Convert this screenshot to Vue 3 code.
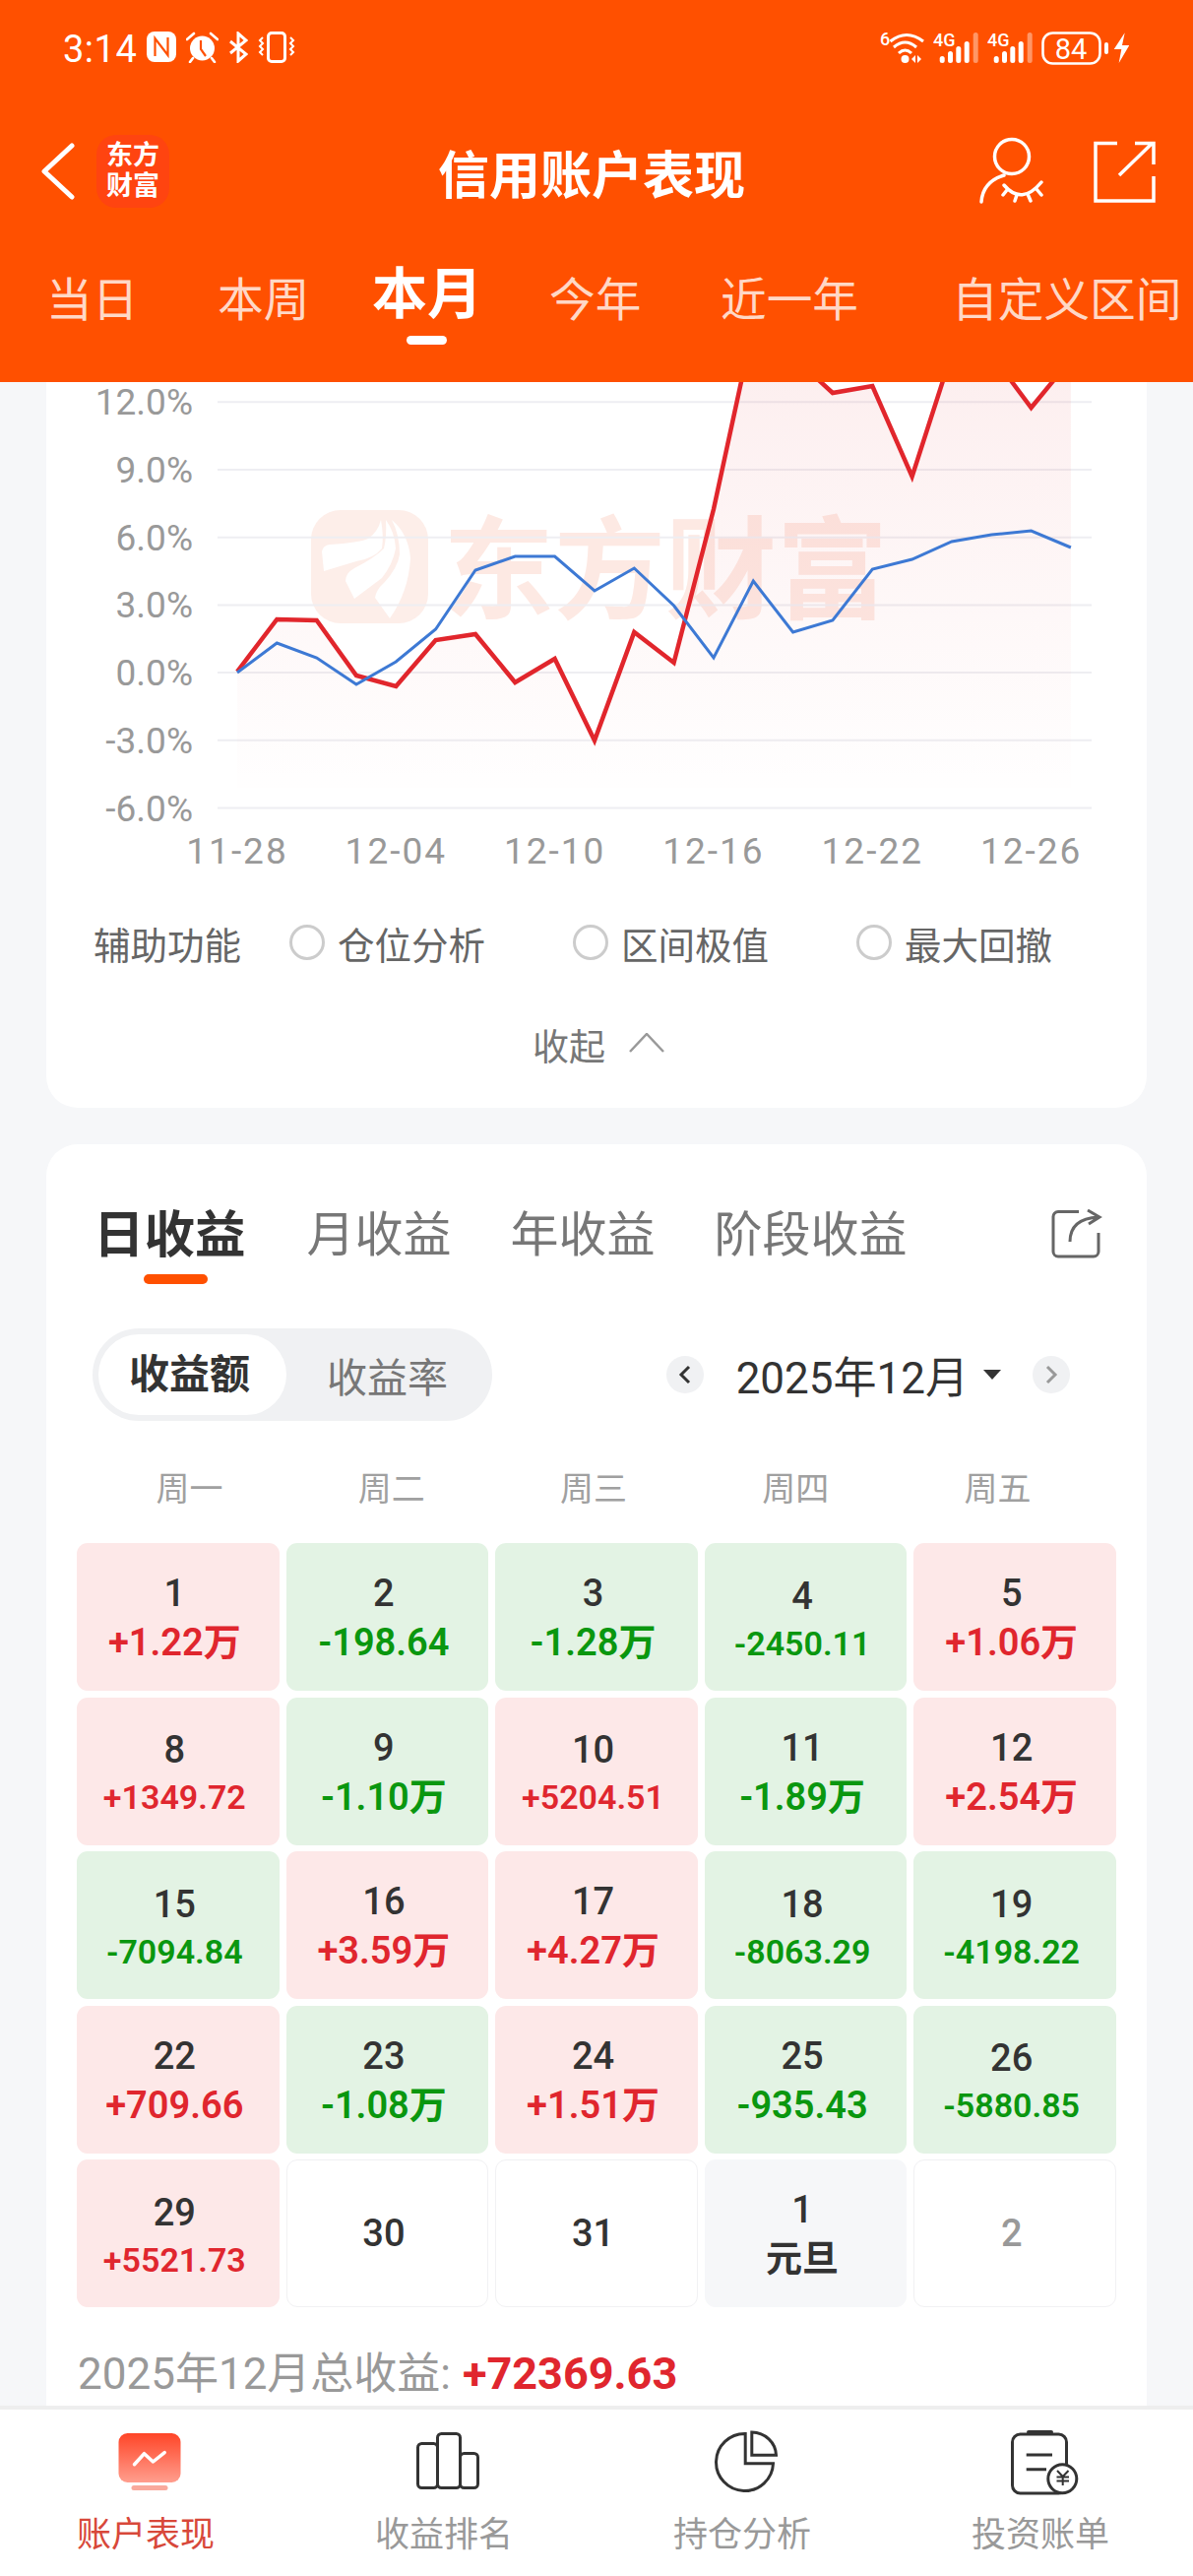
<template>
  <div class="page">
    <header class="top">
      <div class="status">
        <span class="time">3:14</span>
        <svg width="30" height="31" viewBox="0 0 30 31"><rect x="0" y="0" width="30" height="31" rx="8" fill="#fff" /><path d="M8.5 25V7l13 17V6" fill="none" stroke="#ff5000" stroke-width="2.2" /></svg>
        <svg width="33" height="32" viewBox="0 0 33 32"><circle cx="16.5" cy="17" r="12.5" fill="#fff" /><path d="M15 9v9l5 7" fill="none" stroke="#ff5000" stroke-width="2.2" /><path d="M1 8l7-6M32 8l-7-6M7 27l-3 4M26 27l3 4" stroke="#fff" stroke-width="2.6" stroke-linecap="round" /></svg>
        <svg width="20" height="32" viewBox="0 0 20 32"><path d="M2 10l16 13-8 7V2l8 7L2 22" fill="none" stroke="#fff" stroke-width="3" /></svg>
        <svg width="38" height="32" viewBox="0 0 38 32"><rect x="10.5" y="1.5" width="17" height="29" rx="3.5" fill="none" stroke="#fff" stroke-width="3" /><path d="M5 6l-3 3 3 3-3 3 3 3-3 3 3 3M33 6l3 3-3 3 3 3-3 3 3 3-3 3" fill="none" stroke="#fff" stroke-width="2" /></svg>
        <div class="status-right">
          <svg class="tall" width="45" height="42" viewBox="0 -8 45 42">
            <text x="0" y="14" class="st-small">6</text>
            <path d="M10.5 10Q27-3 44 10M14 16Q25.5 6 37 16M19 22q6.500-6 13 0" fill="none" stroke="#fff" stroke-width="3" />
            <circle cx="25.500" cy="28" r="4" fill="#fff" />
            <path d="M36 24l-4 4 4 4zM38 24l4 4-4 4z" fill="#fff" />
          </svg>
          <svg v-for="n in 2" :key="n" class="tall" width="46" height="42" viewBox="0 -8 46 42">
            <text x="0" y="15" class="st-small">4G</text>
            <rect v-for="b in signalBars" :key="b.x" :x="b.x" :y="b.y" width="5" :height="32 - b.y" rx="2.500" fill="#fff" :opacity="b.o" />
          </svg>
          <svg width="89" height="34" viewBox="0 0 89 34">
            <rect x="1.500" y="1.500" width="58" height="31" rx="10" fill="none" stroke="#fff" stroke-width="2.600" />
            <text x="30" y="27.500" text-anchor="middle" class="st-batt">84</text>
            <rect x="64" y="11" width="4" height="12" rx="2" fill="#fff" />
            <path d="M84.700 1.300L73.700 18h7.600l-2.600 14L89.300 14H82z" fill="#fff" />
          </svg>
        </div>
      </div>

      <div class="bar">
        <svg class="back" width="34" height="60" viewBox="0 0 34 60"><path d="M31 4L3 30l28 26" fill="none" stroke="#fff" stroke-width="5" stroke-linecap="round" stroke-linejoin="round" /></svg>
        <div class="logo"><span>东方</span><span>财富</span></div>
        <div class="title">信用账户表现</div>
        <div class="bar-icons">
          <svg width="76" height="76" viewBox="0 0 76 76" fill="none" stroke="#fff" stroke-width="3.500" stroke-linecap="round">
            <circle cx="38" cy="23" r="17.500" />
            <path d="M30 42C17 46 8 55 7 69M30 52Q48 73 68 49M33 57l-4 5M43 62l-2 6M54 61l3 7M63 56l5 6" />
          </svg>
          <svg width="75" height="75" viewBox="0 0 75 75" fill="none" stroke="#fff" stroke-width="3.500">
            <path d="M30 9.500H8V68h59V43M32 42L66 9M48 9.500h19V31" />
          </svg>
        </div>
      </div>

      <div class="periods">
        <div v-for="p in periods" :key="p" class="period" :class="{ on: p === '本月' }">
          {{ p }}
          <i v-if="p === '本月'"></i>
        </div>
      </div>
    </header>

    <main class="scroll">
      <section class="card chart-card">
        <svg class="chart" width="1118" height="502" viewBox="47 388 1118 502">
          <defs>
            <linearGradient id="area" gradientUnits="userSpaceOnUse" x1="0" y1="380" x2="0" y2="790">
              <stop offset="0" stop-color="#e1262c" stop-opacity="0.075" />
              <stop offset="1" stop-color="#e1262c" stop-opacity="0.005" />
            </linearGradient>
          </defs>
          <rect x="316" y="518" width="119" height="115" rx="30" fill="#fdeee9" />
          <path d="M329 580l-2-20q1-6 8-7 30-2 39-6 10-7 13-19 3 16 1 29-8 10-26 13zM360 608l-9-18q0-8 9-13 20-10 30-20 3-12 2-29 9 12 10 29-3 16-14 30zM398 528q17 14 19 39-2 34-21 61l-15-21q1-8 9-15 14-15 16-29 0-20-8-35z" fill="#fff" />
          <text x="450" y="619" class="wm">东方财富</text>
          <line v-for="g in grid" :key="g.label" x1="221" x2="1109" :y1="g.y" :y2="g.y" stroke="#eeeef2" stroke-width="2" />
          <text v-for="g in grid" :key="'l' + g.label" x="196" :y="g.y + 13" text-anchor="end" class="axis">{{ g.label }}</text>
          <text v-for="t in xTicks" :key="t.label" :x="t.x" y="877" text-anchor="middle" class="axis x">{{ t.label }}</text>
          <path :d="areaPath" fill="url(#area)" />
          <path :d="redPath" fill="none" stroke="#e1262c" stroke-width="4.500" />
          <path :d="bluePath" fill="none" stroke="#3d79d4" stroke-width="3" />
        </svg>

        <div class="assist">
          <span class="assist-label">辅助功能</span>
          <label v-for="o in assistOptions" :key="o" class="assist-item"><i></i>{{ o }}</label>
        </div>
        <div class="collapse">
          <span>收起</span>
          <svg width="36" height="20" viewBox="0 0 36 20"><path d="M1 19L18 1l17 18" fill="none" stroke="#999" stroke-width="2.500" /></svg>
        </div>
      </section>

      <section class="card earn-card">
        <div class="earn-tabs">
          <div v-for="t in earnTabs" :key="t" class="earn-tab" :class="{ on: t === '日收益' }">
            {{ t }}
            <i v-if="t === '日收益'"></i>
          </div>
          <svg class="earn-share" width="52" height="50" viewBox="0 0 52 50" fill="none" stroke="#666" stroke-width="3">
            <path d="M28 2.500H7A5 5 0 0 0 2 7.500V43a5 5 0 0 0 5 5h36a5 5 0 0 0 5-5V24" />
            <path d="M19 33C19 18 28 9 48 8M37 1l12 7-11 7" />
          </svg>
        </div>

        <div class="controls">
          <div class="pill">
            <span class="pill-on">收益额</span>
            <span class="pill-off">收益率</span>
          </div>
          <div class="month">
            <span class="round"><svg width="14" height="20" viewBox="0 0 14 20"><path d="M11 2L3 10l8 8" fill="none" stroke="#333" stroke-width="3" /></svg></span>
            <span class="month-text">2025年12月</span>
            <svg class="caret" width="18" height="10" viewBox="0 0 18 10"><path d="M0 0h18l-9 10z" fill="#333" /></svg>
            <span class="round"><svg width="14" height="20" viewBox="0 0 14 20"><path d="M3 2l8 8-8 8" fill="none" stroke="#999" stroke-width="3" /></svg></span>
          </div>
        </div>

        <div class="week">
          <span v-for="w in weekdays" :key="w">{{ w }}</span>
        </div>

        <div class="calendar">
          <div v-for="c in cells" :key="c.key" class="cell" :class="c.type">
            <div class="day">{{ c.d }}</div>
            <div v-if="c.v" class="amount" :class="{ small: c.v.length >= 8 }">{{ c.v }}</div>
            <div v-if="c.note" class="note">{{ c.note }}</div>
          </div>
        </div>

        <div class="total">2025年12月总收益: <b>+72369.63</b></div>
      </section>
    </main>

    <nav class="nav">
      <div class="nav-item on">
        <svg width="72" height="72" viewBox="0 0 72 72">
          <defs>
            <linearGradient id="navRed" x1="0" y1="0" x2="0" y2="1">
              <stop offset="0" stop-color="#ff4527" />
              <stop offset="1" stop-color="#ff9e8e" />
            </linearGradient>
          </defs>
          <rect x="4.500" y="9" width="63" height="50" rx="9" fill="url(#navRed)" />
          <rect x="17.500" y="62" width="37" height="5" rx="2.500" fill="#f9a99c" />
          <path d="M20.500 40.700l10-11 9 8.300 11.700-9.300" fill="none" stroke="#fff" stroke-width="3.500" stroke-linecap="round" stroke-linejoin="round" />
        </svg>
        <span>账户表现</span>
      </div>
      <div class="nav-item">
        <svg width="72" height="72" viewBox="0 0 72 72" fill="none" stroke="#333" stroke-width="3">
          <rect x="5.500" y="19.500" width="20" height="45" rx="4" />
          <rect x="25.500" y="9.500" width="23" height="55" rx="4" />
          <rect x="48.500" y="29.500" width="18" height="35" rx="4" />
        </svg>
        <span>收益排名</span>
      </div>
      <div class="nav-item">
        <svg width="72" height="72" viewBox="0 0 72 72" fill="none" stroke="#333" stroke-width="3">
          <path d="M35.200 9.500V39.700H63.500A29 29 0 1 1 35.200 9.500z" />
          <path d="M41.800 8V31.300H66.500A25 24 0 0 0 41.800 8z" />
        </svg>
        <span>持仓分析</span>
      </div>
      <div class="nav-item">
        <svg width="72" height="72" viewBox="0 0 72 72" fill="none" stroke="#333" stroke-width="3">
          <rect x="3.500" y="10" width="55" height="60" rx="8" />
          <rect x="18" y="6" width="27" height="4" rx="2" fill="#333" stroke="none" />
          <path d="M17.700 31H44M17.700 45.700H38" />
          <circle cx="54.300" cy="55.300" r="14.500" fill="#fff" />
          <path d="M49 47l5.700 6 5.800-6M48.500 53.500H61M48.500 57.500H61M54.700 53v9" stroke-width="2" />
        </svg>
        <span>投资账单</span>
      </div>
    </nav>
  </div>
</template>

<script setup>
const periods = ["当日", "本周", "本月", "今年", "近一年", "自定义区间"];
const assistOptions = ["仓位分析", "区间极值", "最大回撤"];
const earnTabs = ["日收益", "月收益", "年收益", "阶段收益"];
const weekdays = ["周一", "周二", "周三", "周四", "周五"];

const signalBars = [
  { x: 6.7, y: 25, o: 1 },
  { x: 15, y: 20, o: 1 },
  { x: 23.3, y: 15, o: 1 },
  { x: 31.7, y: 10, o: 1 },
  { x: 40.7, y: 1, o: 0.4 },
];

// y positions on screen, chart is scrolled so some go above the header
const redY = [682, 629, 630, 686, 697, 650, 644, 693, 669, 752, 642, 673, 517, 331, 362, 399, 392, 484, 359, 360, 414, 365];
const blueY = [683, 653, 668, 695, 672, 639, 579, 565, 565, 600, 577, 615, 668, 590, 642, 630, 578, 568, 550, 543, 539, 556];

const xAt = (i) => 241 + i * 40.33;
const toPath = (ys) => ys.map((y, i) => (i ? "L" : "M") + xAt(i).toFixed(1) + " " + y).join(" ");

const redPath = toPath(redY);
const bluePath = toPath(blueY);
const areaPath = redPath + " L1088 800 L241 800 Z";

const grid = ["12.0%", "9.0%", "6.0%", "3.0%", "0.0%", "-3.0%", "-6.0%"].map((label, i) => ({
  label,
  y: 408.3 + i * 68.7,
}));

const xTicks = ["11-28", "12-04", "12-10", "12-16", "12-22", "12-26"].map((label, i) => ({
  label,
  x: xAt(i * 4),
}));

const earn = [
  [1, "+1.22万"], [2, "-198.64"], [3, "-1.28万"], [4, "-2450.11"], [5, "+1.06万"],
  [8, "+1349.72"], [9, "-1.10万"], [10, "+5204.51"], [11, "-1.89万"], [12, "+2.54万"],
  [15, "-7094.84"], [16, "+3.59万"], [17, "+4.27万"], [18, "-8063.29"], [19, "-4198.22"],
  [22, "+709.66"], [23, "-1.08万"], [24, "+1.51万"], [25, "-935.43"], [26, "-5880.85"],
  [29, "+5521.73"],
];

const cells = [
  ...earn.map(([d, v]) => ({ key: "d" + d, d, v, type: v[0] === "+" ? "up" : "down" })),
  { key: "d30", d: 30, type: "blank" },
  { key: "d31", d: 31, type: "blank" },
  { key: "n1", d: 1, note: "元旦", type: "holiday" },
  { key: "n2", d: 2, type: "blank next" },
];
</script>

<style scoped>
.page {
  width: 1212px;
  height: 2616px;
  display: flex;
  flex-direction: column;
  overflow: hidden;
  background: #f6f7f9;
  font-family: Roboto, "Noto Sans CJK SC", sans-serif;
}

.top {
  height: 388px;
  flex-shrink: 0;
  background: #ff5000;
  color: #fff;
}

.status {
  height: 129px;
  padding: 32px 65px 0 64px;
  box-sizing: border-box;
  display: flex;
  align-items: flex-start;
  gap: 10px;
}

.time {
  font-size: 38px;
  line-height: 36px;
  letter-spacing: 0.5px;
}

.status-right {
  margin-left: auto;
  display: flex;
  align-items: flex-start;
  gap: 9px;
}

.tall {
  margin-top: -8px;
}

.st-small {
  font-size: 18px;
  font-weight: 500;
  fill: #fff;
}

.st-batt {
  font-size: 29px;
  fill: #fff;
}

.bar {
  height: 90px;
  display: flex;
  align-items: center;
  padding: 0 32px 0 42px;
}

.logo {
  width: 74px;
  height: 74px;
  margin-left: 22px;
  border-radius: 20px;
  background: #ff4410;
  display: flex;
  flex-direction: column;
  align-items: center;
  justify-content: center;
  font-size: 27px;
  line-height: 31px;
  font-weight: 700;
}

.title {
  margin-left: 273px;
  font-size: 52px;
  font-weight: 700;
  white-space: nowrap;
}

.bar-icons {
  margin-left: auto;
  display: flex;
  gap: 39px;
}

.periods {
  display: flex;
  align-items: flex-start;
  padding: 53px 0 0 47px;
}

.period {
  margin-top: 3px;
  font-size: 46.7px;
  line-height: 60px;
  color: #ffd8c6;
  white-space: nowrap;
  display: flex;
  flex-direction: column;
  align-items: center;
}

.period:nth-child(2) { margin-left: 80.6px; }
.period:nth-child(3) { margin-left: 63.6px; }
.period:nth-child(4) { margin-left: 68px; }
.period:nth-child(5) { margin-left: 80.6px; }
.period:nth-child(6) { margin-left: 95px; }

.period.on {
  margin-top: -1px;
  font-size: 56px;
  line-height: 56px;
  font-weight: 700;
  color: #fff;
}

.period i {
  width: 41px;
  height: 9px;
  margin-top: 14px;
  border-radius: 5px;
  background: #fff;
}

.scroll {
  flex: 1;
  min-height: 0;
  overflow: hidden;
}

.card {
  margin: 0 47px;
  background: #fff;
}

.chart-card {
  border-radius: 0 0 32px 32px;
  padding-bottom: 34px;
}

.chart {
  display: block;
}

.wm {
  font-size: 113px;
  font-weight: 700;
  fill: #fde9e3;
}

.axis {
  font-size: 37px;
  fill: #999;
}

.axis.x {
  letter-spacing: 2px;
}

.assist {
  margin-top: 37px;
  height: 60px;
  padding-left: 48px;
  display: flex;
  align-items: center;
  font-size: 37.5px;
  color: #666;
}

.assist-label {
  width: 199px;
  color: #666;
}

.assist-item {
  width: 288px;
  display: flex;
  align-items: center;
  gap: 13px;
  white-space: nowrap;
}

.assist-item i {
  width: 36px;
  height: 36px;
  box-sizing: border-box;
  border: 3px solid #ccc;
  border-radius: 50%;
}

.collapse {
  margin-top: 44px;
  height: 60px;
  display: flex;
  align-items: center;
  justify-content: center;
  gap: 22px;
  padding-left: 4px;
  font-size: 37px;
  color: #777;
}

.collapse svg {
  margin: -4px 0 0 2px;
}

.earn-card {
  margin-top: 37px;
  padding: 63px 0 40px;
  border-radius: 32px 32px 0 0;
}

.earn-tabs {
  position: relative;
  display: flex;
  align-items: flex-start;
  gap: 60px;
  padding-left: 48px;
}

.earn-tab {
  font-size: 49px;
  line-height: 60px;
  color: #777;
  white-space: nowrap;
  display: flex;
  flex-direction: column;
  align-items: center;
}

.earn-tab.on {
  margin-right: 2px;
  font-size: 51.5px;
  font-weight: 700;
  color: #333;
}

.earn-tab i {
  width: 65px;
  height: 10px;
  margin: 9px 0 0 12px;
  border-radius: 5px;
  background: #ff5000;
}

.earn-share {
  margin: 3px 45px 0 auto;
}

.controls {
  margin-top: 45px;
  padding: 0 78px 0 47px;
  display: flex;
  align-items: center;
  justify-content: space-between;
}

.pill {
  width: 406px;
  height: 94px;
  box-sizing: border-box;
  padding: 6px;
  border-radius: 47px;
  background: #f0f1f3;
  display: flex;
  align-items: center;
  font-size: 41px;
}

.pill-on {
  width: 185px;
  height: 82px;
  padding-right: 6px;
  border-radius: 41px;
  background: #fff;
  color: #333;
  font-weight: 700;
  line-height: 82px;
  text-align: center;
}

.pill-off {
  flex: 1;
  padding-left: 2px;
  color: #777;
  text-align: center;
}

.month {
  display: flex;
  align-items: center;
}

.round {
  width: 38px;
  height: 38px;
  border-radius: 50%;
  background: #f0f1f3;
  display: flex;
  align-items: center;
  justify-content: center;
}

.month-text {
  margin-left: 33px;
  font-size: 44px;
  color: #333;
  white-space: nowrap;
}

.caret {
  margin: 0 32px 0 15px;
}

.week {
  margin: 44px 49px 0 43px;
  display: grid;
  grid-template-columns: repeat(5, 1fr);
  height: 50px;
  line-height: 50px;
  font-size: 34px;
  color: #a0a0a0;
  text-align: center;
}

.calendar {
  margin: 30px 31px 0;
  display: grid;
  grid-template-columns: repeat(5, 1fr);
  grid-auto-rows: 150px;
  gap: 6.6px 7px;
}

.cell {
  box-sizing: border-box;
  padding: 5px 7px 0 0;
  border-radius: 11px;
  display: flex;
  flex-direction: column;
  align-items: center;
  justify-content: center;
  color: #333;
}

.cell.up {
  background: #fde8e8;
}

.cell.down {
  background: #e3f3e4;
}

.cell.blank {
  padding-top: 0;
  border: 1.5px solid #f1f1f3;
}

.cell.holiday {
  background: #f6f7f9;
}

.day {
  font-size: 38px;
  line-height: 48px;
  font-weight: 500;
}

.next .day {
  color: #999;
}

.amount {
  font-size: 38px;
  line-height: 53px;
  font-weight: 600;
  white-space: nowrap;
}

.amount.small {
  font-size: 34px;
  line-height: 48px;
}

.up .amount {
  color: #e0262e;
}

.down .amount {
  color: #0a970f;
}

.note {
  font-size: 37px;
  line-height: 53px;
  font-weight: 700;
}

.total {
  margin: 38px 0 0 32px;
  font-size: 44px;
  line-height: 60px;
  color: #999;
  white-space: nowrap;
}

.total b {
  margin-left: 1px;
  font-size: 45px;
  color: #e0262e;
}

.nav {
  height: 173px;
  flex-shrink: 0;
  box-sizing: border-box;
  border-top: 4px solid #eeeeee;
  padding-top: 15px;
  background: #fff;
  display: grid;
  grid-template-columns: repeat(4, 1fr);
}

.nav-item {
  display: flex;
  flex-direction: column;
  align-items: center;
  font-size: 35px;
  color: #999;
}

.nav-item span {
  margin-top: 16px;
  padding-right: 7px;
  line-height: 50px;
}

.nav-item.on span {
  color: #d8483a;
}
</style>

<style>
html,
body {
  margin: 0;
  padding: 0;
}
</style>
